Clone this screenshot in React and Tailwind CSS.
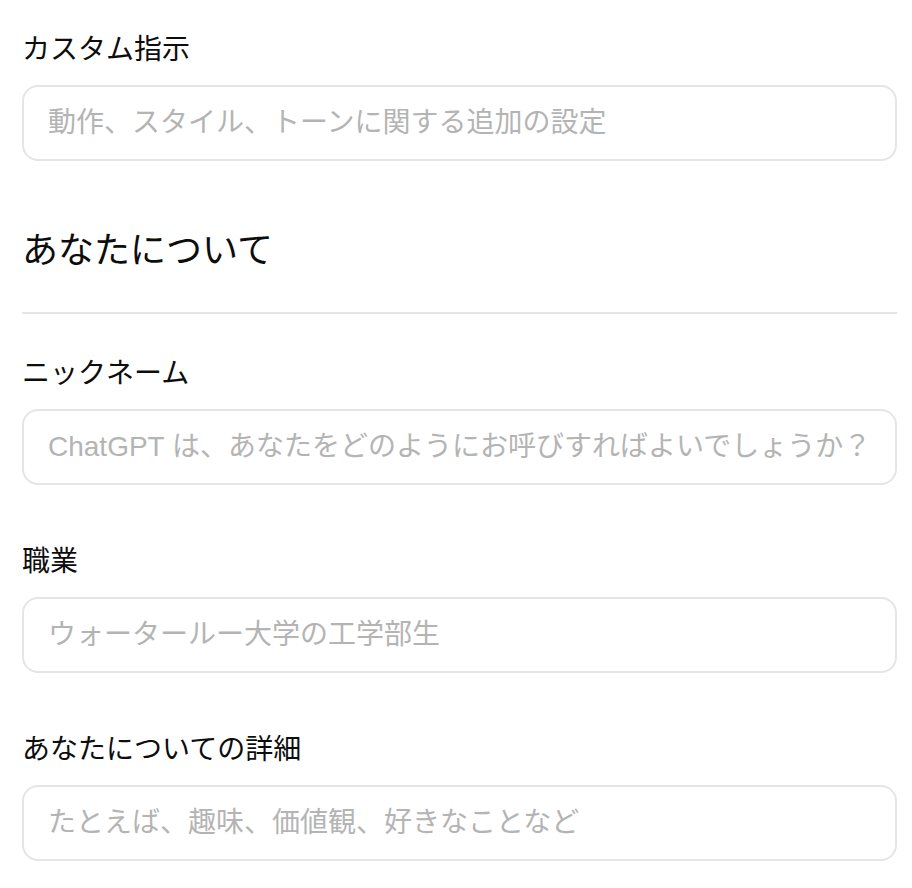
import React from "react";

const font = { fontFamily: '"Liberation Sans", "Noto Sans CJK JP", sans-serif' };

function Field({ label, placeholder, className = "" }) {
  return (
    <div className={className}>
      <label className="block text-[28px] leading-[40px] text-[#0d0d0d]">{label}</label>
      <input
        type="text"
        placeholder={placeholder}
        className="mt-[15px] block w-full h-[76px] rounded-[16px] border-2 border-[#e5e5e5] bg-white px-[24px] text-[28px] text-[#0d0d0d] placeholder:text-[#b4b4b4] outline-none"
        style={font}
      />
    </div>
  );
}

export default function App() {
  return (
    <div className="min-h-screen bg-white pl-[22px] pr-[15px] pt-[30px]" style={font}>
      {/* Custom instructions */}
      <Field label="カスタム指示" placeholder="動作、スタイル、トーンに関する追加の設定" />

      {/* About you */}
      <h2 className="mt-[66px] text-[36px] leading-[48px] text-[#0d0d0d]">あなたについて</h2>
      <div className="mt-[37px] h-[2px] bg-[#e5e5e5]" />

      <Field
        className="mt-[40px]"
        label="ニックネーム"
        placeholder="ChatGPT は、あなたをどのようにお呼びすればよいでしょうか？"
      />
      <Field className="mt-[57px]" label="職業" placeholder="ウォータールー大学の工学部生" />
      <Field
        className="mt-[57px]"
        label="あなたについての詳細"
        placeholder="たとえば、趣味、価値観、好きなことなど"
      />
    </div>
  );
}
